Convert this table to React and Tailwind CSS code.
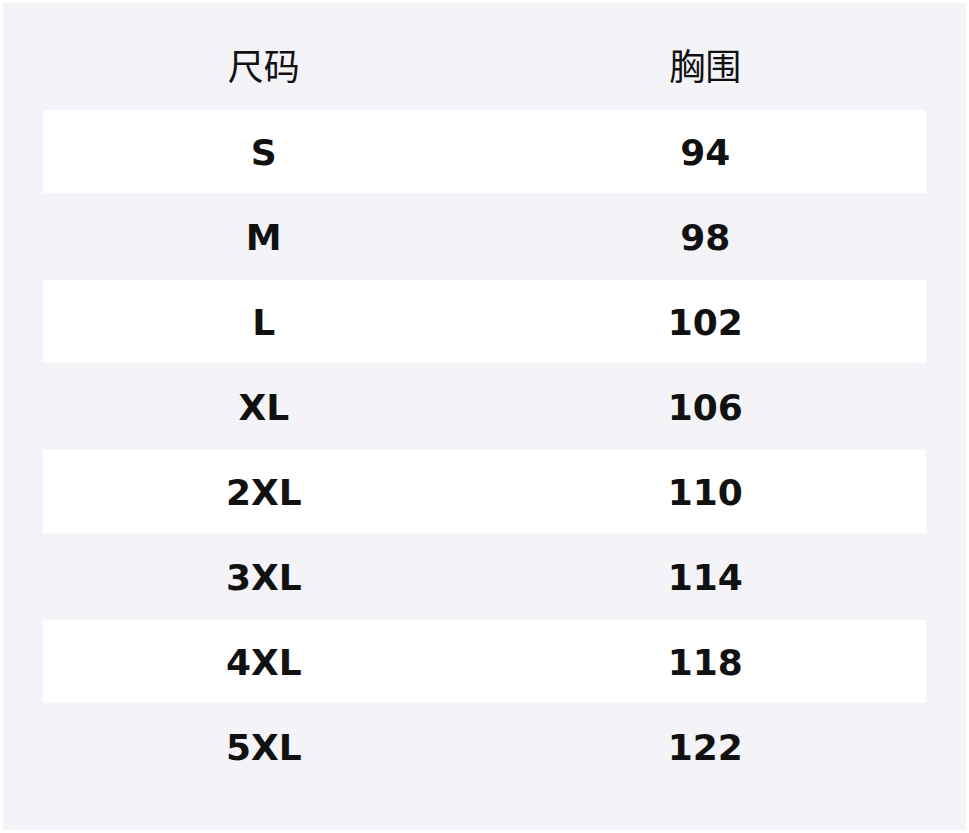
import React from "react";

const rows = [
  ["S", "94"],
  ["M", "98"],
  ["L", "102"],
  ["XL", "106"],
  ["2XL", "110"],
  ["3XL", "114"],
  ["4XL", "118"],
  ["5XL", "122"],
];

const App = () => {
  return (
    <div className="w-[969px] h-[833px] bg-white p-[3px]">
      <div
        className="h-full bg-[#f3f3f8] px-[40px] pb-[40px] pt-[40px] text-[#111111]"
        style={{ fontFamily: '"DejaVu Sans", "Noto Sans CJK SC", sans-serif' }}
      >
        <div className="grid grid-cols-2 h-[50px] mb-[16px] items-center text-[36px] leading-none">
          <div className="text-center">尺码</div>
          <div className="text-center">胸围</div>
        </div>
        {rows.map(([size, chest], i) => (
          <div
            key={size}
            className={
              "grid grid-cols-2 h-[85px] items-center text-[36px] font-bold leading-none border-y border-[#f3f3f8] pt-[2px] " +
              (i % 2 === 0 ? "bg-white" : "bg-transparent")
            }
          >
            <div className="text-center">{size}</div>
            <div className="text-center">{chest}</div>
          </div>
        ))}
      </div>
    </div>
  );
};

export default App;
